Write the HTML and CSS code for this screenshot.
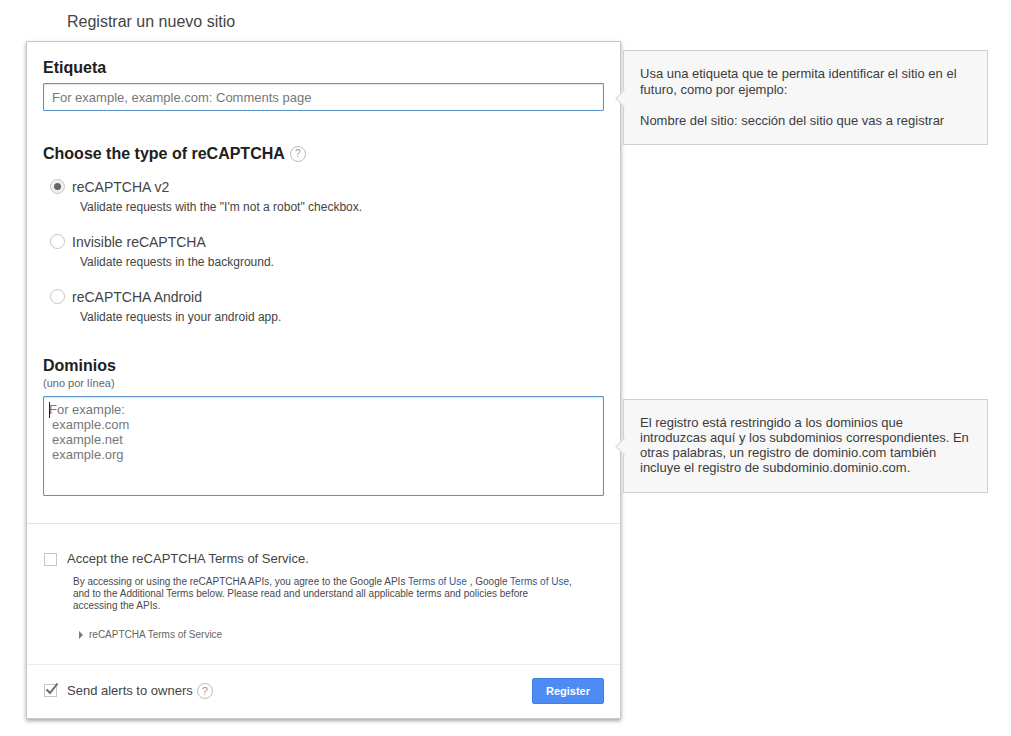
FILE: index.html
```html
<!DOCTYPE html>
<html lang="es">
<head>
<meta charset="utf-8">
<title>Registrar un nuevo sitio</title>
<link rel="stylesheet" href="styles.css">
</head>
<body>
<h1 class="page-title">Registrar un nuevo sitio</h1>
<div class="layout">
  <form class="card">
    <section class="top">
      <h2 class="heading">Etiqueta</h2>
      <div class="field field-label">For example, example.com: Comments page</div>
      <h2 class="heading heading-type">Choose the type of reCAPTCHA <span class="help help-type">?</span></h2>
      <div class="options">
        <div class="option">
          <span class="radio radio-on"></span>
          <div><div class="option-name">reCAPTCHA v2</div><div class="option-desc">Validate requests with the "I'm not a robot" checkbox.</div></div>
        </div>
        <div class="option">
          <span class="radio"></span>
          <div><div class="option-name">Invisible reCAPTCHA</div><div class="option-desc">Validate requests in the background.</div></div>
        </div>
        <div class="option">
          <span class="radio"></span>
          <div><div class="option-name">reCAPTCHA Android</div><div class="option-desc">Validate requests in your android app.</div></div>
        </div>
      </div>
      <h2 class="heading heading-domains">Dominios</h2>
      <div class="hint">(uno por línea)</div>
      <div class="field field-area"><span class="caret"></span><span class="first">For example:</span><br><span class="indent">example.com</span><br><span class="indent">example.net</span><br><span class="indent">example.org</span></div>
    </section>
    <section class="terms">
      <div class="check-row">
        <span class="checkbox"></span>
        <span>Accept the reCAPTCHA Terms of Service.</span>
      </div>
      <p class="legal">By accessing or using the reCAPTCHA APIs, you agree to the Google APIs <a class="link">Terms of Use</a> , Google <a class="link">Terms of Use</a>,<br>and to the Additional Terms below. Please read and understand all applicable terms and policies before<br>accessing the APIs.</p>
      <div class="disclosure"><span class="tri"></span>reCAPTCHA Terms of Service</div>
    </section>
    <section class="footer">
      <div class="check-row">
        <span class="checkbox">
          <svg class="tick" viewBox="0 0 14 14" width="14" height="14"><path d="M1.5 7.5 L5 11 L12.5 1.5" fill="none" stroke="#6a6a6a" stroke-width="2"/></svg>
        </span>
        <span>Send alerts to owners</span>
        <span class="help help-alerts">?</span>
      </div>
      <button type="button" class="register">Register</button>
    </section>
  </form>
  <aside class="notes">
    <div class="note note-one">Usa una etiqueta que te permita identificar el sitio en el<br>futuro, como por ejemplo:<br><br>Nombre del sitio: sección del sitio que vas a registrar</div>
    <div class="note note-two">El registro está restringido a los dominios que<br>introduzcas aquí y los subdominios correspondientes. En<br>otras palabras, un registro de dominio.com también<br>incluye el registro de subdominio.dominio.com.</div>
  </aside>
</div>
</body>
</html>
```

FILE: styles.css
```css
* { box-sizing: border-box; }
html, body { margin: 0; padding: 0; }
body {
  background: #fff;
  color: #404040;
  font-family: "Liberation Sans", Arial, sans-serif;
  font-size: 13px;
  height: 736px;
  overflow: hidden;
}
.page-title {
  margin: 0;
  padding: 12px 0 0 67px;
  height: 41px;
  font-size: 16px;
  line-height: 19px;
  font-weight: 400;
  color: #444;
}
.layout {
  display: flex;
  align-items: flex-start;
  padding-left: 26px;
}
.card {
  width: 595px;
  height: 678px;
  border: 1px solid #c8c8c8;
  box-shadow: 0 2px 4px rgba(0, 0, 0, 0.35);
  background: #fff;
  display: flex;
  flex-direction: column;
}
.top {
  padding: 16px 16px 0;
  height: 482px;
  border-bottom: 1px solid #e3e3e3;
}
.heading {
  margin: 0;
  font-size: 16px;
  line-height: 19px;
  font-weight: 700;
  color: #202020;
}
.field {
  border: 1px solid #5b93c9;
  border-radius: 1px;
  box-shadow: inset 0 1px 2px rgba(0, 0, 0, 0.12);
  color: #777;
  font-size: 13px;
  width: 561px;
}
.field-label {
  margin-top: 6px;
  height: 28px;
  padding: 0 8px;
  line-height: 28px;
}
.heading-type { margin-top: 33px; }
.help {
  display: inline-block;
  border: 1px solid #bbb;
  border-radius: 50%;
  color: #999;
  text-align: center;
  font-weight: 400;
  vertical-align: middle;
}
.help-type {
  width: 16px;
  height: 16px;
  font-size: 10px;
  line-height: 14px;
  margin-left: 1px;
  margin-top: -1px;
}
.help-alerts {
  width: 16px;
  height: 16px;
  font-size: 11px;
  line-height: 14px;
}
.options {
  margin-top: 16px;
  padding-left: 7px;
  display: flex;
  flex-direction: column;
  gap: 20px;
}
.option {
  display: flex;
  gap: 7px;
}
.radio {
  flex: none;
  width: 15px;
  height: 15px;
  border: 1px solid #c4c4c4;
  border-radius: 50%;
  background: #fff;
  display: flex;
  align-items: center;
  justify-content: center;
}
.radio-on { background: #f0f0f0; }
.radio-on::before {
  content: "";
  width: 7px;
  height: 7px;
  border-radius: 50%;
  background: #666;
}
.option-name {
  font-size: 14px;
  line-height: 16px;
  color: #444;
}
.option-desc {
  margin-top: 5px;
  padding-left: 8px;
  font-size: 12px;
  line-height: 14px;
  color: #444;
}
.heading-domains { margin-top: 32px; }
.hint {
  margin-top: 2px;
  font-size: 11px;
  line-height: 13px;
  color: #666;
}
.field-area {
  position: relative;
  margin-top: 6px;
  height: 100px;
  padding: 5px;
  line-height: 15px;
  font-size: 13px;
}
.caret {
  position: absolute;
  left: 5px;
  top: 5px;
  width: 1px;
  height: 16px;
  background: #222;
}
.indent { padding-left: 3px; }
.terms {
  height: 141px;
  padding: 27px 16px 0 17px;
  border-bottom: 1px solid #ececec;
}
.check-row {
  display: flex;
  align-items: center;
  font-size: 13px;
  line-height: 16px;
  color: #444;
  gap: 10px;
}
.checkbox {
  flex: none;
  width: 13px;
  height: 13px;
  border: 1px solid #c6c6c6;
  position: relative;
}
.tick {
  position: absolute;
  left: 0;
  top: -3px;
}
.legal {
  margin: 9px 0 0 29px;
  font-size: 10px;
  line-height: 12px;
  color: #4a4a4a;
}
.link { color: #2a5a96; }
.disclosure {
  margin: 17px 0 0 35px;
  font-size: 10px;
  line-height: 12px;
  color: #666;
  display: flex;
  align-items: center;
  gap: 6px;
}
.tri {
  width: 0;
  height: 0;
  border-left: 4px solid #777;
  border-top: 4px solid transparent;
  border-bottom: 4px solid transparent;
}
.footer {
  flex: 1;
  display: flex;
  align-items: center;
  justify-content: space-between;
  padding: 0 16px 2px 17px;
}
.footer .help-alerts { margin-left: -6px; }
.register {
  width: 72px;
  height: 26px;
  padding: 0;
  border: 1px solid #3f80e4;
  border-radius: 2px;
  background: #4d8cf4;
  color: #fff;
  font-family: inherit;
  font-size: 11px;
  font-weight: 700;
}
.notes {
  margin-left: 2px;
  padding-top: 9px;
  display: flex;
  flex-direction: column;
  gap: 254px;
}
.note {
  position: relative;
  width: 365px;
  border: 1px solid #cfcfcf;
  background: #f7f7f7;
  color: #3c3c3c;
  font-size: 13px;
  line-height: 15px;
  padding: 15px 16px 0;
}
.note::before {
  content: "";
  position: absolute;
  left: -6px;
  top: 41px;
  width: 12px;
  height: 12px;
  background: #f7f7f7;
  border-left: 1px solid #d8d8d8;
  border-bottom: 1px solid #d8d8d8;
  transform: rotate(45deg);
}
.note-one { height: 95px; line-height: 15.5px; }
.note-two { height: 94px; }
.note-two::before { top: 40px; }
```
